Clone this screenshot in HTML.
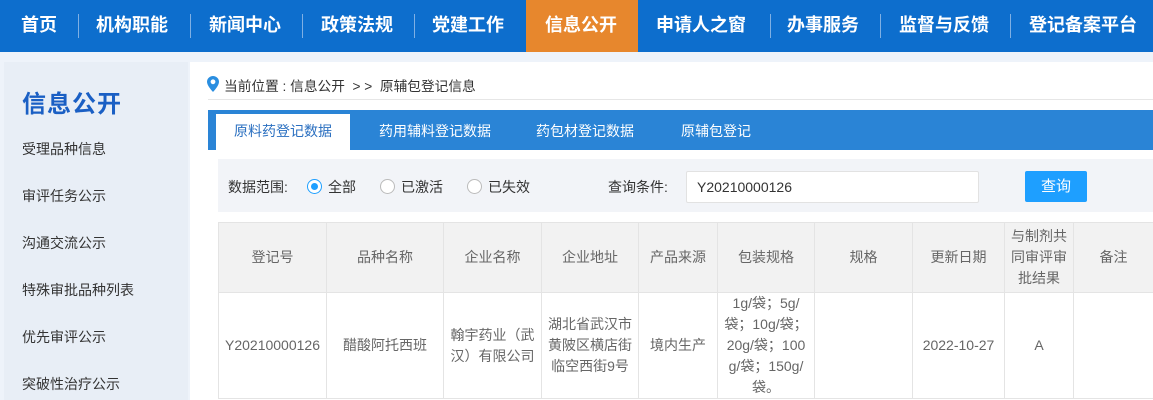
<!DOCTYPE html>
<html><head><meta charset="utf-8"><style>
*{margin:0;padding:0;box-sizing:border-box}
body{width:1153px;height:400px;overflow:hidden;background:#eef3fa;font-family:"Liberation Sans","Noto Sans CJK SC",sans-serif;position:relative}
.nav{position:absolute;left:0;top:0;width:1153px;height:52px;background:#0d6ecd}
.nav span{position:absolute;top:0;height:52px;line-height:50px;color:#fff;font-size:18px;font-weight:bold;white-space:nowrap}
.nav i{position:absolute;top:14px;width:1px;height:24px;background:#7fb0e4}
.act{position:absolute;left:526px;top:0;width:112px;height:52px;background:#e7872d}
.side{position:absolute;left:4px;top:62px;width:184px;height:338px;background:#e8eef6}
.side h1{position:absolute;left:18px;top:22px;font-size:24px;color:#1a5fc4;font-weight:bold;letter-spacing:1px}
.side p{position:absolute;left:18px;font-size:14px;color:#333}
.main{position:absolute;left:190px;top:62px;width:963px;height:338px;background:#fff}
.abs{position:absolute;white-space:nowrap}
.tabs{position:absolute;left:208px;top:110px;width:945px;height:40px;background:#2a84d6}
.tabs span{position:absolute;top:0;line-height:42px;color:#fff;font-size:14px}
.filter{position:absolute;left:218px;top:159px;width:935px;height:53px;background:#f2f4f8}
.radio{position:absolute;width:15px;height:15px;border:1px solid #bbb;border-radius:50%;background:#fff}
table{position:absolute;left:218px;top:222px;border-collapse:collapse;table-layout:fixed;width:935px}
td,th{border:1px solid #e4e4e4;text-align:center;color:#666;font-size:14px;font-weight:normal;line-height:21px;padding:0 4px}
th{background:#f2f2f2;height:70px}
td{height:106px}
</style></head><body>
<div class="nav">
<div class="act"></div>
<span style="left:21px">首页</span><i style="left:78px"></i>
<span style="left:96px">机构职能</span><i style="left:190px"></i>
<span style="left:209px">新闻中心</span><i style="left:302px"></i>
<span style="left:321px">政策法规</span><i style="left:414px"></i>
<span style="left:432px">党建工作</span>
<span style="left:545px">信息公开</span>
<span style="left:656px">申请人之窗</span><i style="left:770px"></i>
<span style="left:787px">办事服务</span><i style="left:880px"></i>
<span style="left:899px">监督与反馈</span><i style="left:1010px"></i>
<span style="left:1029px">登记备案平台</span>
</div>
<div class="side">
<h1>信息公开</h1>
<p style="top:77px">受理品种信息</p>
<p style="top:124px">审评任务公示</p>
<p style="top:171px">沟通交流公示</p>
<p style="top:218px">特殊审批品种列表</p>
<p style="top:265px">优先审评公示</p>
<p style="top:312px">突破性治疗公示</p>
</div>
<div class="main"></div>
<svg class="abs" style="left:207px;top:76px" width="12" height="16" viewBox="0 0 12 16"><path d="M6 0C2.7 0 0 2.6 0 5.8 0 10 6 16 6 16s6-6 6-10.2C12 2.6 9.3 0 6 0z" fill="#2a8ee0"/><circle cx="6" cy="5.8" r="2.4" fill="#fff"/></svg>
<div class="abs" style="left:224px;top:75px;font-size:13.7px;color:#333">当前位置 : 信息公开 &nbsp;&gt; &gt;&nbsp; 原辅包登记信息</div>
<div class="abs" style="left:208px;top:99px;width:945px;height:1px;background:#e6e6e6"></div>
<div class="tabs">
<div class="abs" style="left:8px;top:4px;width:134px;height:36px;background:#fff"></div>
<span style="left:26px;color:#2a6fc0;top:0">原料药登记数据</span>
<span style="left:171px">药用辅料登记数据</span>
<span style="left:328px">药包材登记数据</span>
<span style="left:473px">原辅包登记</span>
</div>
<div class="filter">
<div class="abs" style="left:10px;top:18px;font-size:14px;color:#333">数据范围:</div>
<div class="radio" style="left:89px;top:20px;border-color:#1e9fff"><div style="position:absolute;left:3px;top:3px;width:7px;height:7px;border-radius:50%;background:#1e9fff"></div></div>
<div class="abs" style="left:110px;top:18px;font-size:14px;color:#333">全部</div>
<div class="radio" style="left:162px;top:20px"></div>
<div class="abs" style="left:183px;top:18px;font-size:14px;color:#333">已激活</div>
<div class="radio" style="left:249px;top:20px"></div>
<div class="abs" style="left:270px;top:18px;font-size:14px;color:#333">已失效</div>
<div class="abs" style="left:390px;top:18px;font-size:14px;color:#333">查询条件:</div>
<div class="abs" style="left:468px;top:12px;width:293px;height:32px;background:#fff;border:1px solid #e2e2e2;border-radius:2px;font-size:14px;color:#333;line-height:30px;padding-left:10px">Y20210000126</div>
<div class="abs" style="left:807px;top:12px;width:62px;height:31px;background:#1e9fff;border-radius:2px;color:#fff;font-size:15px;line-height:31px;text-align:center">查询</div>
</div>
<table>
<colgroup><col style="width:108px"><col style="width:117px"><col style="width:98px"><col style="width:97px"><col style="width:79px"><col style="width:97px"><col style="width:98px"><col style="width:92px"><col style="width:69px"><col style="width:80px"></colgroup>
<tr><th>登记号</th><th>品种名称</th><th>企业名称</th><th>企业地址</th><th>产品来源</th><th>包装规格</th><th>规格</th><th>更新日期</th><th>与制剂共同审评审批结果</th><th>备注</th></tr>
<tr><td style="padding:0">Y20210000126</td><td>醋酸阿托西班</td><td>翰宇药业（武汉）有限公司</td><td>湖北省武汉市黄陂区横店街临空西街9号</td><td>境内生产</td><td style="word-break:break-all">1g/袋；5g/袋；10g/袋；20g/袋；100g/袋；150g/袋。</td><td></td><td>2022-10-27</td><td>A</td><td></td></tr>
</table>
</body></html>
